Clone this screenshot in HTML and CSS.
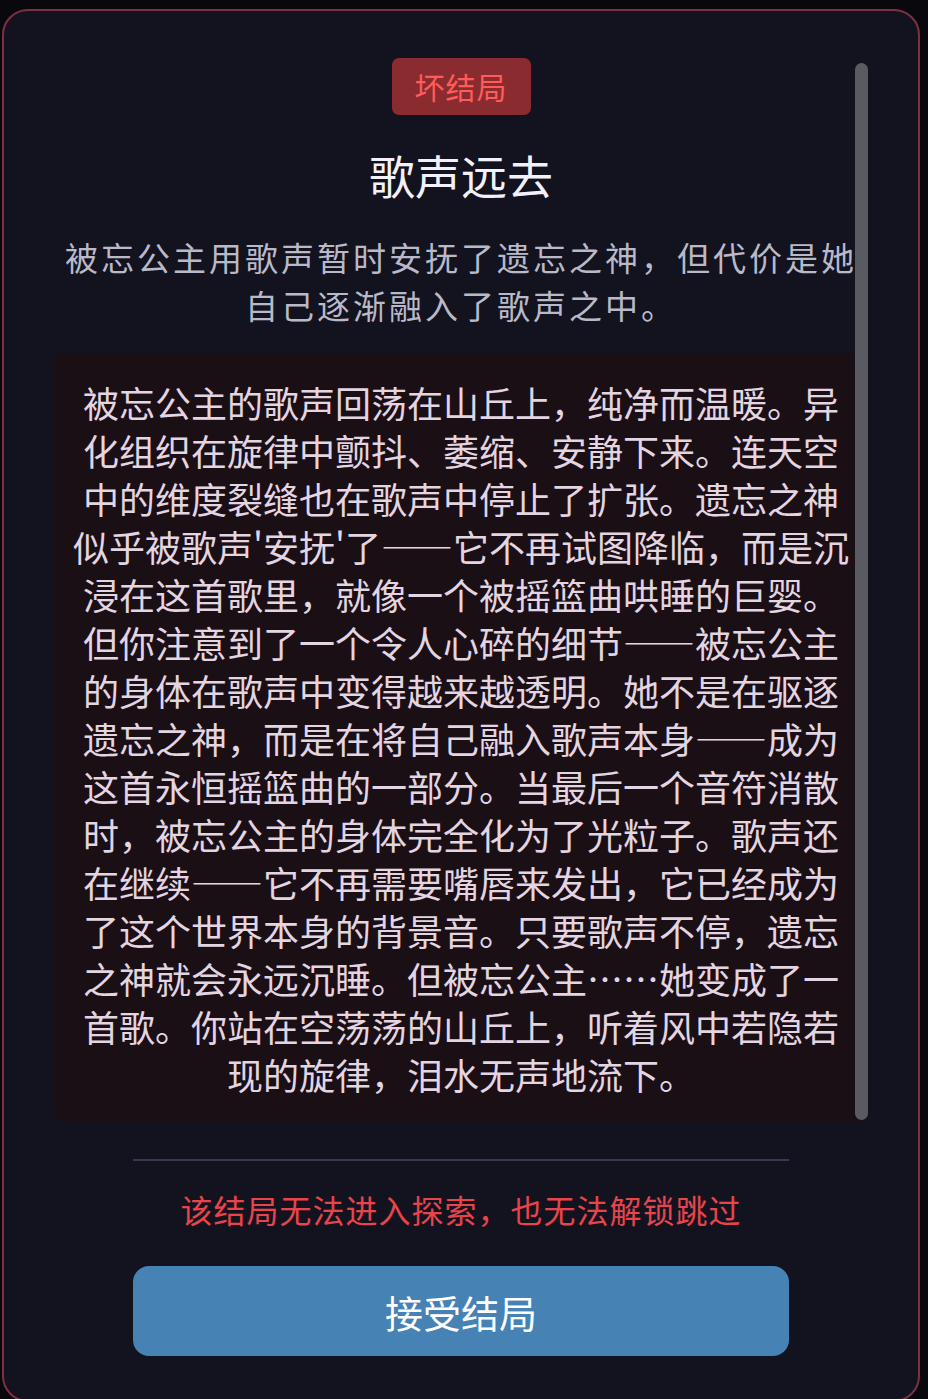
FILE: index.html
```html
<!DOCTYPE html>
<html lang="zh-CN">
<head>
  <meta charset="UTF-8" />
  <meta name="viewport" content="width=device-width, initial-scale=1.0"/>
  <title>结局</title>
  <link rel="stylesheet" href="styles.css">
</head>
<body>
  <div class="modal">
    <div class="scroll">
      <div class="scroll-body">
        <span class="badge">坏结局</span>
        <h2 class="title">歌声远去</h2>
        <p class="summary">被忘公主用歌声暂时安抚了遗忘之神，但代价是她自己逐渐融入了歌声之中。</p>
        <div class="story">被忘公主的歌声回荡在山丘上，纯净而温暖。异化组织在旋律中颤抖、萎缩、安静下来。连天空中的维度裂缝也在歌声中停止了扩张。遗忘之神似乎被歌声'安抚'了——它不再试图降临，而是沉浸在这首歌里，就像一个被摇篮曲哄睡的巨婴。但你注意到了一个令人心碎的细节——被忘公主的身体在歌声中变得越来越透明。她不是在驱逐遗忘之神，而是在将自己融入歌声本身——成为这首永恒摇篮曲的一部分。当最后一个音符消散时，被忘公主的身体完全化为了光粒子。歌声还在继续——它不再需要嘴唇来发出，它已经成为了这个世界本身的背景音。只要歌声不停，遗忘之神就会永远沉睡。但被忘公主……她变成了一首歌。你站在空荡荡的山丘上，听着风中若隐若现的旋律，泪水无声地流下。</div>
      </div>
      <div class="scroll-thumb"></div>
    </div>

    <div class="footer">
      <div class="divider"></div>
      <p class="warning">该结局无法进入探索，也无法解锁跳过</p>
      <button class="accept">接受结局</button>
    </div>
  </div>
</body>
</html>
```

FILE: styles.css
```css
body {
  margin: 0;
  height: 1399px;
  overflow: hidden;
  background: #09090d;
  font-family: "Noto Sans CJK SC", "Noto Sans", sans-serif;
}
.modal {
  box-sizing: border-box;
  width: 918px;
  height: 1393px;
  margin: 9px 0 0 2px;
  background: #13131f;
  border: 2px solid #7d3042;
  border-radius: 26px;
  overflow: hidden;
  display: flex;
  flex-direction: column;
}
.scroll {
  position: relative;
  margin: 0 50px;
  padding-top: 47px;
}
.scroll-body {
  display: flex;
  flex-direction: column;
  align-items: center;
}
/* overlay scrollbar of the story panel */
.scroll-thumb {
  position: absolute;
  top: 52px;
  right: 0;
  width: 13px;
  height: 1057px;
  border-radius: 7px;
  background: #5a5a62;
}
.badge {
  height: 57px;
  line-height: 57px;
  padding: 0 23px;
  border-radius: 7px;
  background: #8a2b2f;
  color: #ff5b5b;
  font-size: 30px;
  letter-spacing: 1px;
}
.title {
  margin: 29px 0 0;
  font-size: 46px;
  line-height: 60px;
  font-weight: 400;
  color: #f2f0fa;
}
.summary {
  width: 100%;
  margin: 29px 0 0;
  font-size: 33px;
  line-height: 48px;
  letter-spacing: 3px;
  color: #b9b9c9;
  text-align: center;
}
.story {
  box-sizing: border-box;
  width: 100%;
  margin-top: 24px;
  padding: 25px 16px 24px;
  border-radius: 9px;
  background: #1b0f16;
  color: #e3d5e1;
  font-size: 36px;
  line-height: 48px;
  text-align: center;
}
.footer {
  display: flex;
  flex-direction: column;
  align-items: center;
}
.divider {
  width: 656px;
  height: 2px;
  margin-top: 37px;
  background: #353a4e;
}
.warning {
  margin: 26px 0 0;
  font-size: 32px;
  line-height: 44px;
  letter-spacing: 1px;
  color: #e8444b;
}
.accept {
  width: 656px;
  height: 90px;
  margin-top: 35px;
  border: none;
  border-radius: 16px;
  background: #4682b4;
  color: #fff;
  font-family: inherit;
  font-size: 38px;
  cursor: pointer;
}
```
